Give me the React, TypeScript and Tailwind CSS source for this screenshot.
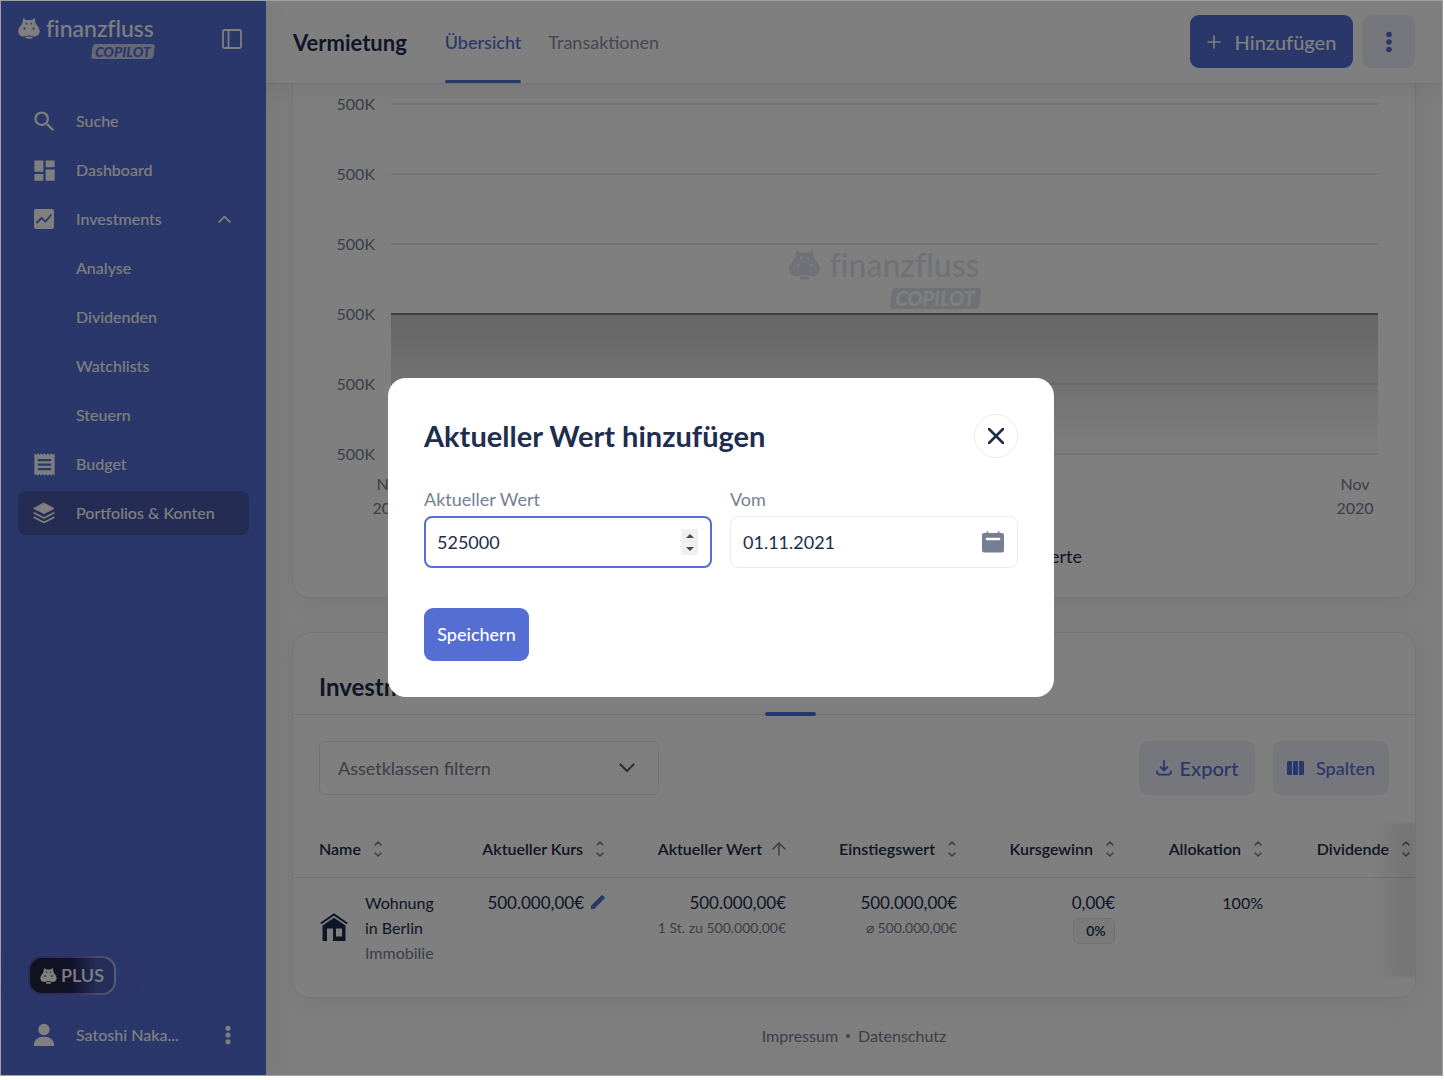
import React, {ReactNode, useState} from "react";
import {MdDashboard, MdReceipt, MdSearch} from "react-icons/md";

const Hippo = ({className}: {className?: string}) => (
    <svg viewBox="0 0 90 88" fill="currentColor" className={className} aria-hidden="true">
        <path
            fillRule="evenodd"
            d="M20 4Q20 1 23 2Q28 1 28 6L34 8H56L62 6Q62 1 67 2Q70 1 70 4L72 20C74 28 90 40 90 56C90 70 78 79 65 77C57 76 54 73 45 73C36 73 33 76 25 77C12 79 0 70 0 56C0 40 16 28 18 20ZM35 19a3 4.500 0 1 0 .1 9a3 4.500 0 1 0 -.1 -9ZM55 19a3 4.500 0 1 0 .1 9a3 4.500 0 1 0 -.1 -9ZM26 40a4.500 4.500 0 1 0 .1 9a4.500 4.500 0 1 0 -.1 -9ZM64 40a4.500 4.500 0 1 0 .1 9a4.500 4.500 0 1 0 -.1 -9Z"
        />
        <ellipse cx="45" cy="82" rx="15" ry="5"/>
    </svg>
);

const PanelIcon = () => (
    <svg viewBox="0 0 20 20" fill="none" stroke="currentColor" strokeWidth="1.8" className="size-5" aria-hidden="true">
        <rect x="1" y="1" width="18" height="18" rx="1.500"/>
        <path d="M6.500 1v18"/>
    </svg>
);

const TrendIcon = () => (
    <svg viewBox="0 0 20 20" className="size-5" aria-hidden="true">
        <rect width="20" height="20" rx="2" fill="currentColor"/>
        <path d="M2.500 14l5-5 4 3.500 6-7" fill="none" stroke="#546ed4" strokeWidth="1.800"/>
    </svg>
);

const LayersIcon = () => (
    <svg viewBox="0 0 22 22" className="size-[22px]" fill="none" stroke="currentColor" strokeWidth="1.700" strokeLinecap="round" strokeLinejoin="round" aria-hidden="true">
        <path d="M11 1.200L21 6.500L11 11.500L1 6.500Z" fill="currentColor" strokeWidth="1"/>
        <path d="M1.200 11L11 16L20.800 11M1.200 15.500L11 20.500L20.800 15.500"/>
    </svg>
);

const UserIcon = () => (
    <svg viewBox="0 0 20 24" fill="currentColor" className="h-6 w-5" aria-hidden="true">
        <circle cx="10" cy="6.500" r="5.700"/>
        <path d="M0 23v-1.500C0 16.500 4.500 13.800 10 13.800S20 16.500 20 21.500V23Z"/>
    </svg>
);

const Dots = ({className}: {className?: string}) => (
    <svg viewBox="0 0 6 22" fill="currentColor" className={className} aria-hidden="true">
        <circle cx="3" cy="3.500" r="2.800"/>
        <circle cx="3" cy="11" r="2.800"/>
        <circle cx="3" cy="18.500" r="2.800"/>
    </svg>
);

const Chevron = ({className}: {className?: string}) => (
    <svg viewBox="0 0 16 10" fill="none" stroke="currentColor" strokeWidth="2.200" strokeLinecap="round" strokeLinejoin="round" className={className} aria-hidden="true">
        <path d="M1.500 1.500L8 8l6.500-6.500"/>
    </svg>
);

const SortIcon = () => (
    <svg viewBox="0 0 10 16" fill="none" stroke="#747f94" strokeWidth="1.500" strokeLinecap="round" strokeLinejoin="round" className="h-4 w-[10px] shrink-0" aria-hidden="true">
        <path d="M2 4l3-3 3 3M2 12l3 3 3-3"/>
    </svg>
);

const ArrowUp = () => (
    <svg viewBox="0 0 14 14" fill="none" stroke="#747f94" strokeWidth="1.500" strokeLinecap="round" strokeLinejoin="round" className="size-[14px] shrink-0" aria-hidden="true">
        <path d="M7 13V1M1 7l6-6 6 6"/>
    </svg>
);

const PencilIcon = () => (
    <svg viewBox="0 0 14 14" fill="currentColor" className="size-[14px]" aria-hidden="true">
        <path d="M0 14V10.800L7.900 2.900L11.100 6.100L3.200 14ZM8.700 2.100L10.200.6q.9-.9 1.800 0L13.400 2q.9.9 0 1.800L11.900 5.300Z"/>
        <path d="M7 4l2-2 3 3-2 2Z"/>
    </svg>
);

const DownloadIcon = () => (
    <svg viewBox="0 0 16 16" fill="none" stroke="currentColor" strokeWidth="1.800" strokeLinecap="round" strokeLinejoin="round" className="size-4" aria-hidden="true">
        <path d="M8 1v9M4.500 7L8 10.500L11.500 7M1 11.500c0 2 1 3.200 3 3.200h8c2 0 3-1.200 3-3.200"/>
    </svg>
);

const ColumnsIcon = () => (
    <svg viewBox="0 0 17 14" fill="currentColor" className="h-[14px] w-[17px]" aria-hidden="true">
        <path d="M1.500 0H5v14H1.500Q0 14 0 12.500v-11Q0 0 1.500 0ZM6 0h5v14H6ZM12 0h3.500Q17 0 17 1.500v11q0 1.500-1.500 1.500H12Z"/>
    </svg>
);

const CalendarIcon = () => (
    <svg viewBox="0 0 22 22" className="size-[22px]" aria-hidden="true">
        <path d="M2 2h2.500V.5h1.800V2h9.400V.5h1.800V2H20q2 0 2 2v15.500q0 2-2 2H2q-2 0-2-2V4q0-2 2-2Z" fill="#747f94"/>
        <path d="M5 8h12" stroke="#fff" strokeWidth="2.600" strokeLinecap="round"/>
    </svg>
);

const HouseIcon = () => (
    <svg viewBox="0 0 28 28" className="size-7 shrink-0" aria-hidden="true">
        <path d="M.8 10.500L14 1.500l13.200 9" fill="none" stroke="#202d4e" strokeWidth="2"/>
        <path fillRule="evenodd" d="M2.500 12.500L14 4.800l11.500 7.700V28H13V15.500H7V28H2.500ZM16 15.500v8h6v-8Z" fill="#202d4e"/>
    </svg>
);

type LogoProps = {large?: boolean, colors: string, badge: string, badgeText: string};

const Logo = ({large, colors, badge, badgeText}: LogoProps) => (
    <div className={`inline-flex flex-col items-end [font-variant-ligatures:none] ${colors}`}>
        <div className={`flex items-center font-medium ${large ? "gap-[9px]" : "gap-[6px]"}`}>
            <Hippo className={large ? "h-[30px] w-[31px]" : "h-[21px] w-[22px]"}/>
            <span className={large ? "text-[32px] leading-[30px]" : "text-[23px] leading-[26px]"}>finanzfluss</span>
        </div>
        <span className={`relative flex items-center justify-center font-black italic ${large ? "mt-2 h-[21px] w-[89px] text-[20px]" : "mt-[3px] h-[15px] w-[62px] text-[14px]"}`}>
            <span className={`absolute inset-0 -skew-x-8 rounded-[3px] ${badge}`}/>
            <span className={`relative leading-none ${badgeText}`}>COPILOT</span>
        </span>
    </div>
);

const NavItem = ({icon, label, active, trailing}: {icon?: ReactNode, label: string, active?: boolean, trailing?: ReactNode}) => (
    <a href="#" className={`flex h-11 items-center gap-[18px] rounded-lg pr-[18px] pl-3 ${active ? "bg-[#4858a8]" : ""}`}>
        <span className="flex w-7 shrink-0 justify-center">{icon}</span>
        <span className="flex-1">{label}</span>
        {trailing}
    </a>
);

const Sidebar = () => (
    <aside className="relative z-20 flex w-[265px] shrink-0 flex-col bg-[#546ed4] px-[17px] text-[16px] font-medium text-white shadow-[4px_0_24px_rgba(0,0,0,0.06)]">
        <div className="flex items-start justify-between pt-[14px] pr-1">
            <Logo colors="text-white" badge="bg-[#ccd2ea]" badgeText="text-[#546ed4]"/>
            <button aria-label="Seitenleiste einklappen" className="mt-[14px] mr-[3px]"><PanelIcon/></button>
        </div>
        <nav className="mt-10 flex flex-col gap-[5px]">
            <NavItem icon={<MdSearch size={27}/>} label="Suche"/>
            <NavItem icon={<MdDashboard size={27}/>} label="Dashboard"/>
            <NavItem icon={<TrendIcon/>} label="Investments" trailing={<Chevron className="w-[13px] rotate-180"/>}/>
            <NavItem label="Analyse"/>
            <NavItem label="Dividenden"/>
            <NavItem label="Watchlists"/>
            <NavItem label="Steuern"/>
            <NavItem icon={<MdReceipt size={27}/>} label="Budget"/>
            <NavItem icon={<LayersIcon/>} label="Portfolios & Konten" active={true}/>
        </nav>
        <div className="mt-auto pb-[18px]">
            <button className="ml-[10px] rounded-[14px] bg-linear-to-r from-[#4c5cb0] via-[#6a5cb8] to-[#b4bce4] p-[2px] shadow-[0_0_20px_rgba(100,110,230,0.5)]">
                <span className="flex h-[35px] w-[84px] items-center justify-center gap-1 rounded-xl bg-linear-to-r from-[#20243e] from-30% via-[#26245c] via-50% to-[#4a5cb0] to-80% text-[18px] font-semibold">
                    <Hippo className="h-4 w-[17px]"/>
                    PLUS
                </span>
            </button>
            <div className="mt-[18px] flex h-11 items-center gap-[18px] pr-[18px] pl-3">
                <span className="flex w-7 justify-center"><UserIcon/></span>
                <span className="flex-1">Satoshi Naka...</span>
                <button aria-label="Kontomenü"><Dots className="h-5 w-[6px]"/></button>
            </div>
        </div>
    </aside>
);

const Header = () => (
    <header className="relative z-10 flex h-[83px] shrink-0 items-stretch border-b border-[#e6e6ea] bg-white px-[27px] shadow-[0_4px_24px_rgba(0,0,0,0.08)]">
        <h1 className="self-center text-[22px] font-bold">Vermietung</h1>
        <nav className="ml-[38px] flex gap-[27px] text-[18px]">
            <a href="#" className="relative flex items-center font-medium text-[#546ed4]">
                Übersicht
                <span className="absolute inset-x-0 bottom-0 h-[3px] rounded-full bg-[#546ed4]"/>
            </a>
            <a href="#" className="flex items-center text-[#8a91a0]">Transaktionen</a>
        </nav>
        <div className="ml-auto flex gap-[9px] pt-[14px]">
            <button className="flex h-[53px] w-[163px] items-center justify-center gap-[14px] rounded-[9px] bg-[#546ed4] text-[20px] font-medium text-white">
                <svg viewBox="0 0 14 14" stroke="currentColor" strokeWidth="1.600" strokeLinecap="round" className="size-[14px]" aria-hidden="true">
                    <path d="M7 1v12M1 7h12"/>
                </svg>
                Hinzufügen
            </button>
            <button aria-label="Weitere Aktionen" className="flex size-[53px] items-center justify-center rounded-[9px] bg-[#eceefa] text-[#546ed4]">
                <Dots className="h-[22px] w-[6px]"/>
            </button>
        </div>
    </header>
);

const ChartCard = () => (
    <section className="rounded-b-[18px] border border-t-0 border-[#ebebef] bg-white pt-[10px] pb-7 shadow-[0_4px_24px_rgba(0,0,0,0.05)]">
        <div className="flex gap-4 pr-[37px]">
            <div className="flex h-[370px] w-[82px] flex-col justify-between text-right text-[16px] leading-5 text-[#747f94]">
                {[0, 1, 2, 3, 4, 5].map(i => <span key={i}>500K</span>)}
            </div>
            <div className="relative h-[370px] flex-1">
                <div className="absolute inset-0 flex items-center justify-center">
                    <Logo large={true} colors="text-[#e0e2ec]" badge="bg-[#e0e2ec]" badgeText="text-white"/>
                </div>
                <svg className="relative size-full" aria-hidden="true">
                    <defs>
                        <linearGradient id="area" x1="0" y1="0" x2="0" y2="1">
                            <stop offset="0" stopColor="#000" stopOpacity="0.2"/>
                            <stop offset="1" stopColor="#000" stopOpacity="0.01"/>
                        </linearGradient>
                    </defs>
                    {[10, 80, 150, 290, 360].map(y => (
                        <line key={y} x1="0" x2="100%" y1={y} y2={y} stroke="#e2e2e4" strokeWidth="1.500"/>
                    ))}
                    <rect x="0" y="220" width="100%" height="140" fill="url(#area)"/>
                    <line x1="0" x2="100%" y1="220" y2="220" stroke="#7c7c7c" strokeWidth="2"/>
                </svg>
            </div>
        </div>
        <div className="mt-2 flex justify-between pr-[37px] pl-[75px] text-center text-[16px] leading-6 text-[#747f94]">
            <span className="w-[46px]">Nov 2020</span>
            <span className="w-[46px]">Nov 2020</span>
        </div>
        <div className="mx-auto mt-6 flex w-[456px] justify-between pb-px text-[18px] leading-6">
            <span>Portfoliowert</span>
            <span>Eingezahlte Werte</span>
        </div>
    </section>
);

const columns = [
    {label: "Aktueller Kurs", width: "w-[150px]"},
    {label: "Aktueller Wert", width: "w-[181px]", sorted: true},
    {label: "Einstiegswert", width: "w-[171px]"},
    {label: "Kursgewinn", width: "w-[158px]"},
    {label: "Allokation", width: "w-[148px]"},
    {label: "Dividende", width: "w-[152px] pr-1"},
];

const HoldingsTable = () => (
    <div className="relative mt-[27px] overflow-hidden">
        <table className="w-full table-fixed text-[16px]">
            <thead>
                <tr className="h-[55px] border-b border-[#e6e6ea]">
                    <th className="pl-[26px] text-left font-semibold">
                        <span className="flex items-center gap-3">Name <SortIcon/></span>
                    </th>
                    {columns.map(({label, width, sorted}) => (
                        <th key={label} className={`whitespace-nowrap font-semibold ${width}`}>
                            <span className={`flex items-center justify-end ${sorted ? "gap-[10px]" : "gap-3"}`}>
                                {label} {sorted ? <ArrowUp/> : <SortIcon/>}
                            </span>
                        </th>
                    ))}
                </tr>
            </thead>
            <tbody>
                <tr className="text-right align-top leading-[25px]">
                    <td className="pt-3 pb-[13px] pl-[27px] text-left">
                        <div className="flex items-center gap-[17px]">
                            <HouseIcon/>
                            <div className="w-20">
                                <p>Wohnung in Berlin</p>
                                <p className="text-[#747f94]">Immobilie</p>
                            </div>
                        </div>
                    </td>
                    <td className="pt-3 text-[17px]">
                        <span className="flex items-center justify-end gap-[7px]">
                            500.000,00€
                            <button aria-label="Kurs bearbeiten" className="text-[#546ed4]"><PencilIcon/></button>
                        </span>
                    </td>
                    <td className="pt-3">
                        <p className="text-[17px]">500.000,00€</p>
                        <p className="text-[14px] text-[#747f94]">1 St. zu 500.000,00€</p>
                    </td>
                    <td className="pt-3">
                        <p className="text-[17px]">500.000,00€</p>
                        <p className="text-[14px] text-[#747f94]">⌀ 500.000,00€</p>
                    </td>
                    <td className="pt-3">
                        <p className="text-[17px]">0,00€</p>
                        <span className="mt-[3px] inline-flex h-[26px] w-[42px] items-center justify-center rounded-md border border-[#e0e0e4] bg-[#f5f5f7] pl-1 text-[14px] font-semibold">0%</span>
                    </td>
                    <td className="pt-3">100%</td>
                    <td/>
                </tr>
            </tbody>
        </table>
        <div className="pointer-events-none absolute inset-y-0 right-0 w-11 bg-linear-to-r from-black/0 to-black/10 blur-[3px]"/>
    </div>
);

const InvestmentsCard = () => (
    <section className="mt-[34px] overflow-hidden rounded-[18px] border border-[#ebebef] bg-white pb-[19px] shadow-[0_4px_24px_rgba(0,0,0,0.05)]">
        <div className="flex h-[82px] items-end border-b border-[#e6e6ea] px-[26px] pb-[13px]">
            <h2 className="text-[24px] leading-7 font-bold">Investments</h2>
        </div>
        <div className="relative mx-auto h-0 w-[178px]">
            <span className="absolute -top-[3px] left-0 h-1 w-[51px] rounded-full bg-[#546ed4]"/>
        </div>
        <div className="mt-[26px] flex justify-between px-[26px]">
            <div className="relative w-[340px]">
                <select aria-label="Assetklassen filtern" className="h-[54px] w-full appearance-none rounded-md border border-[#e6e6ea] px-[18px] text-[18px] text-[#747f94]">
                    <option>Assetklassen filtern</option>
                </select>
                <Chevron className="pointer-events-none absolute top-[22px] right-6 w-4 text-[#5a6478]"/>
            </div>
            <div className="flex gap-[18px] font-medium text-[#546ed4]">
                <button className="flex h-[54px] w-[116px] items-center justify-center gap-2 rounded-[9px] bg-[#eceefa] text-[20px]">
                    <DownloadIcon/> Export
                </button>
                <button className="flex h-[54px] w-[116px] items-center justify-center gap-3 rounded-[9px] bg-[#eceefa] text-[18px]">
                    <ColumnsIcon/> Spalten
                </button>
            </div>
        </div>
        <HoldingsTable/>
    </section>
);

const ValueModal = ({onClose}: {onClose: () => void}) => {
    const [value, setValue] = useState(525000);
    const [date, setDate] = useState("01.11.2021");

    return (
        <div className="absolute inset-0 z-30 flex items-center justify-center bg-black/50 pr-px pb-px">
            <form
                role="dialog"
                aria-labelledby="modal-title"
                className="w-[666px] rounded-[18px] bg-white p-9"
                onSubmit={e => e.preventDefault()}
            >
                <div className="flex h-11 items-center justify-between">
                    <h2 id="modal-title" className="text-[29px] font-bold">Aktueller Wert hinzufügen</h2>
                    <button type="button" aria-label="Schließen" onClick={onClose} className="flex size-11 items-center justify-center rounded-full border border-[#ebebef]">
                        <svg viewBox="0 0 16 16" stroke="currentColor" strokeWidth="2.600" strokeLinecap="round" className="size-4" aria-hidden="true">
                            <path d="M1 1l14 14M15 1L1 15"/>
                        </svg>
                    </button>
                </div>
                <div className="mt-[30px] grid grid-cols-2 gap-[18px] text-[18px]">
                    <div>
                        <label htmlFor="value" className="block leading-[22px] text-[#747f94]">Aktueller Wert</label>
                        <div className="relative mt-[6px]">
                            <input
                                id="value"
                                type="number"
                                value={value}
                                onChange={e => setValue(Number(e.target.value))}
                                className="h-[52px] w-full rounded-lg border-2 border-[#546ed4] px-[11px] outline-none [-moz-appearance:textfield] [&::-webkit-inner-spin-button]:appearance-none"
                            />
                            <div className="absolute top-[13px] right-[14px] flex h-[26px] w-[17px] flex-col bg-[#f0f0f0] text-[#4a4a4a]">
                                <button type="button" aria-label="Erhöhen" onClick={() => setValue(value + 1)} className="flex flex-1 items-center justify-center">
                                    <svg viewBox="0 0 8 4" fill="currentColor" className="h-1 w-2"><path d="M0 4l4-4 4 4Z"/></svg>
                                </button>
                                <button type="button" aria-label="Verringern" onClick={() => setValue(value - 1)} className="flex flex-1 items-center justify-center">
                                    <svg viewBox="0 0 8 4" fill="currentColor" className="h-1 w-2"><path d="M0 0l4 4 4-4Z"/></svg>
                                </button>
                            </div>
                        </div>
                    </div>
                    <div>
                        <label htmlFor="date" className="block leading-[22px] text-[#747f94]">Vom</label>
                        <div className="relative mt-[6px]">
                            <input
                                id="date"
                                value={date}
                                onChange={e => setDate(e.target.value)}
                                className="h-[52px] w-full rounded-lg border border-[#ebebef] px-3 outline-none"
                            />
                            <span className="pointer-events-none absolute inset-y-0 right-[14px] flex items-center"><CalendarIcon/></span>
                        </div>
                    </div>
                </div>
                <button type="submit" className="mt-10 h-[53px] w-[105px] rounded-[9px] bg-[#546ed4] text-[18px] font-medium text-white">Speichern</button>
            </form>
        </div>
    );
};

export default function App() {
    const [isOpen, setIsOpen] = useState<boolean>(true);

    return (
        <div className="h-screen bg-white pr-px pb-1 font-['Lato',sans-serif] text-[#202d4e]">
            <div className="relative flex h-full overflow-hidden border border-[#a0a0a0]">
                <Sidebar/>
                <div className="flex min-w-0 flex-1 flex-col bg-[#fcfcfd]">
                    <Header/>
                    <main className="flex-1 overflow-hidden px-[26px]">
                        <ChartCard/>
                        <InvestmentsCard/>
                        <footer className="mt-[26px] flex items-center justify-center gap-2 text-[16px] leading-6 text-[#747f94]">
                            <a href="#">Impressum</a>
                            <span className="size-1 rounded-full bg-[#747f94]"/>
                            <a href="#">Datenschutz</a>
                        </footer>
                    </main>
                </div>
                {isOpen && <ValueModal onClose={() => setIsOpen(false)}/>}
            </div>
        </div>
    );
}
